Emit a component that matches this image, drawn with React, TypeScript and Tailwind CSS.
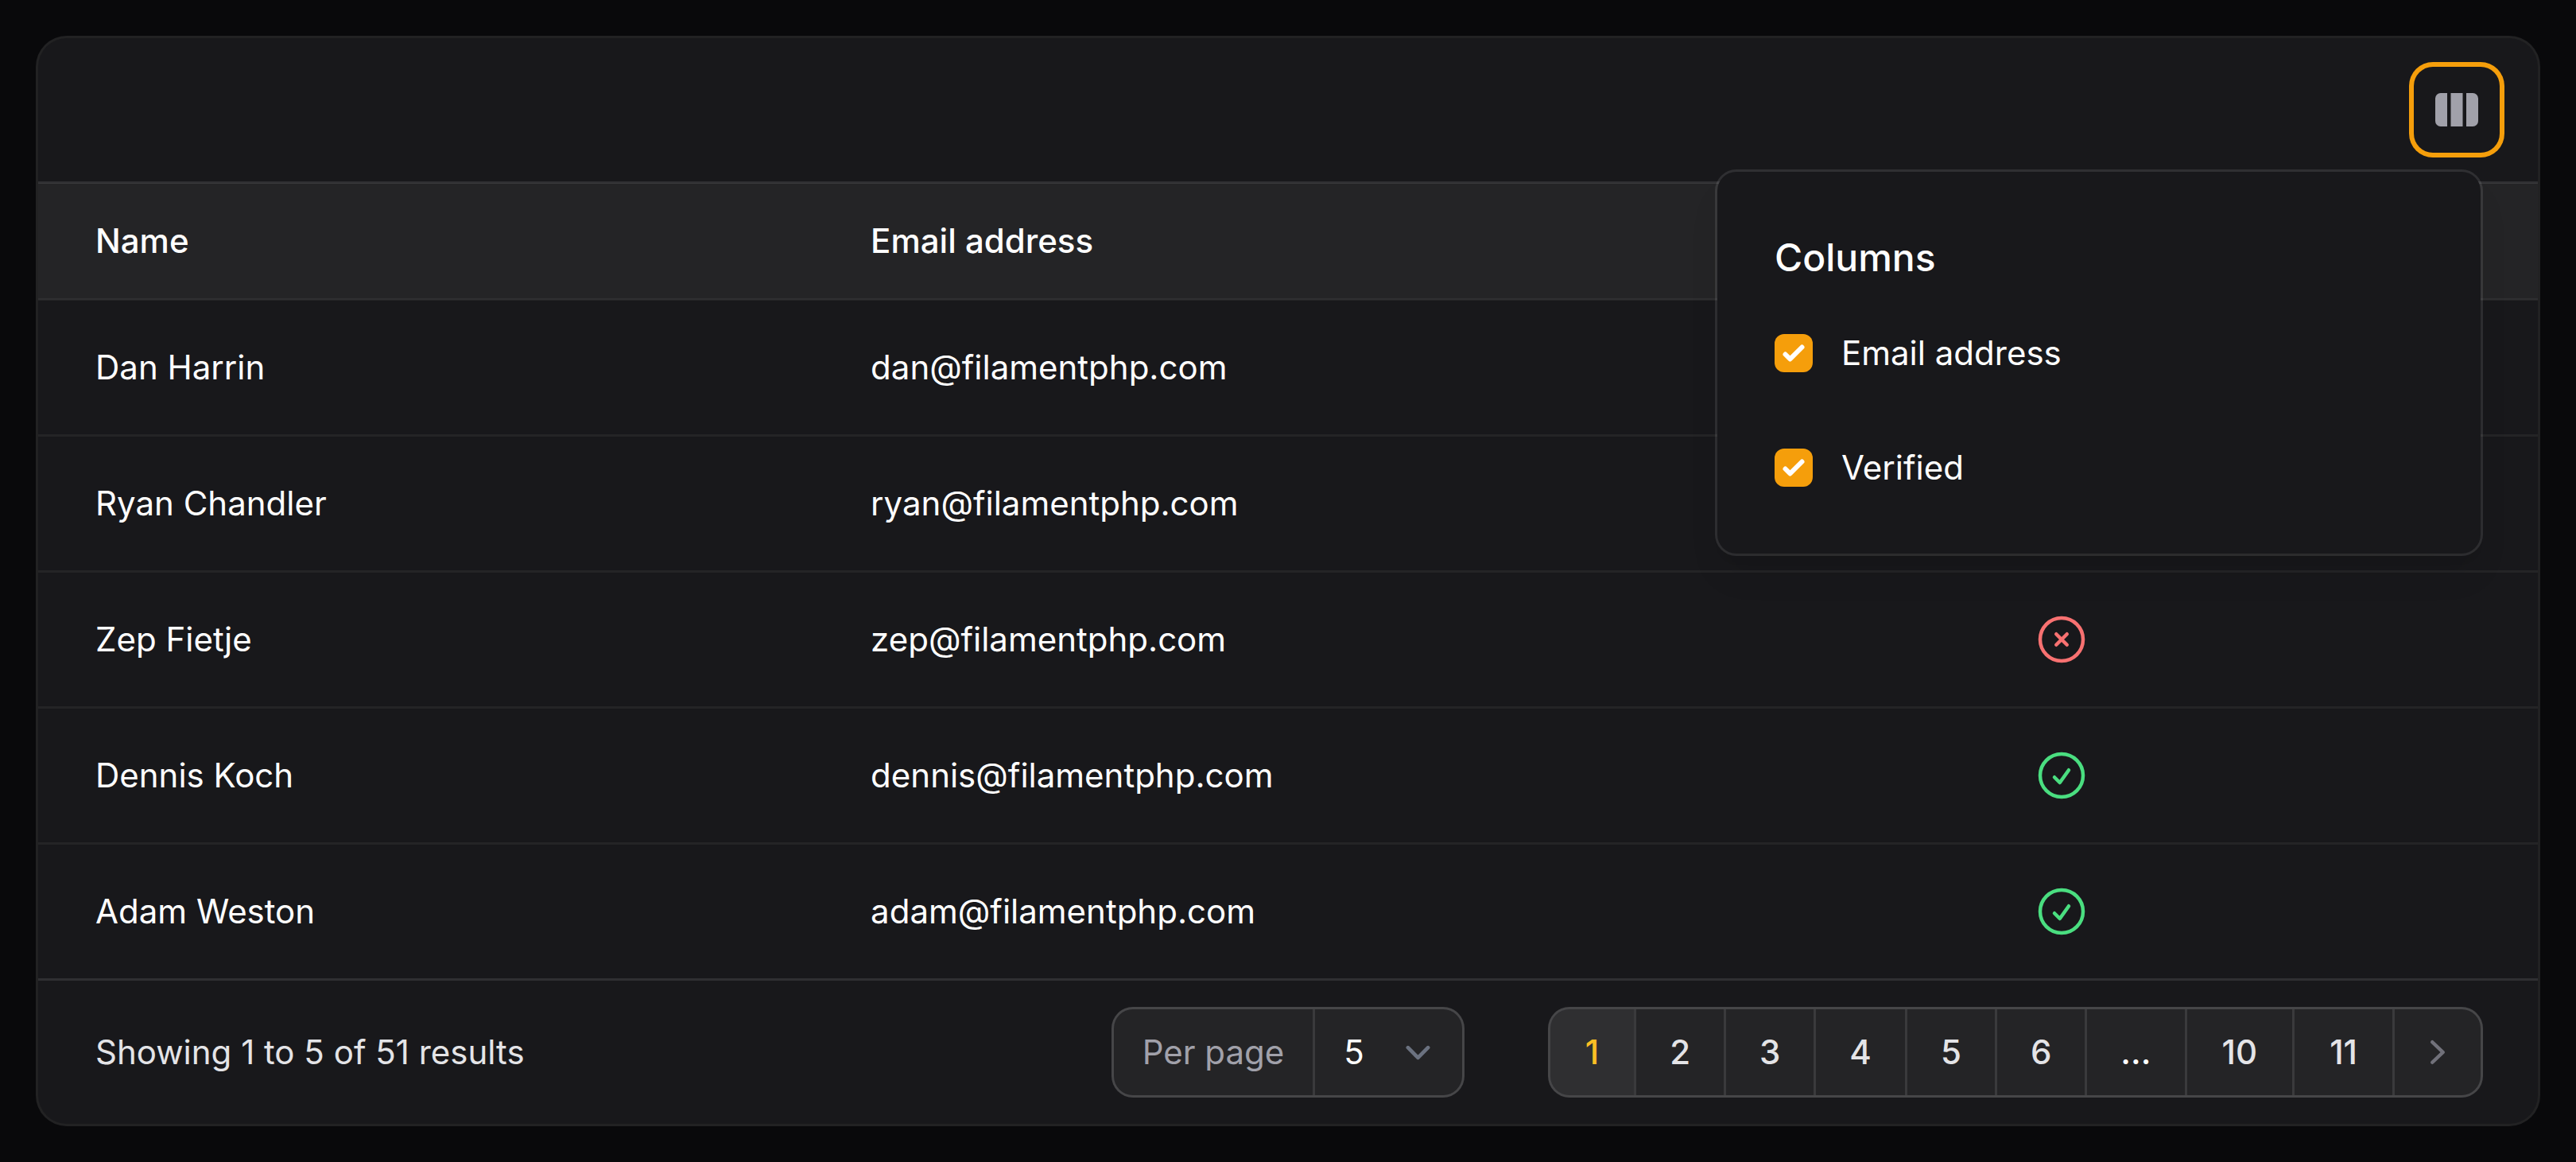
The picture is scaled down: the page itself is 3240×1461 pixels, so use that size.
import { useState } from "react";

type User = { name: string; email: string; verified: boolean };

const users: User[] = [
  { name: "Dan Harrin", email: "dan@filamentphp.com", verified: true },
  { name: "Ryan Chandler", email: "ryan@filamentphp.com", verified: true },
  { name: "Zep Fietje", email: "zep@filamentphp.com", verified: false },
  { name: "Dennis Koch", email: "dennis@filamentphp.com", verified: true },
  { name: "Adam Weston", email: "adam@filamentphp.com", verified: true },
];

const pages = ["1", "2", "3", "4", "5", "6", "...", "10", "11"];

function StatusIcon({ ok }: { ok: boolean }) {
  return (
    <svg
      viewBox="0 0 24 24"
      fill="none"
      stroke="currentColor"
      strokeWidth={1.5}
      strokeLinecap="round"
      strokeLinejoin="round"
      role="img"
      aria-label={ok ? "Verified" : "Not verified"}
      className={ok ? "mx-auto size-[72px] text-[#4ade80]" : "mx-auto size-[72px] text-[#f87171]"}
    >
      <path
        d={
          ok
            ? "M9 12.75 11.25 15 15 9.75M21 12a9 9 0 1 1-18 0 9 9 0 0 1 18 0Z"
            : "m9.75 9.75 4.5 4.5m0-4.5-4.5 4.5M21 12a9 9 0 1 1-18 0 9 9 0 0 1 18 0Z"
        }
      />
    </svg>
  );
}

function ColumnToggle({ id, label }: { id: string; label: string }) {
  const [on, setOn] = useState(true);
  return (
    <div className="flex items-center gap-9">
      <span className="relative flex size-12">
        <input
          id={id}
          type="checkbox"
          checked={on}
          onChange={() => setOn(!on)}
          className="peer size-12 appearance-none rounded-xl bg-white/10 checked:bg-[#f59e0b]"
        />
        <svg
          viewBox="0 0 16 16"
          fill="white"
          aria-hidden="true"
          className="pointer-events-none absolute inset-0 hidden size-12 peer-checked:block"
        >
          <path d="M12.207 4.793a1 1 0 010 1.414l-5 5a1 1 0 01-1.414 0l-2-2a1 1 0 011.414-1.414L6.5 9.086l4.293-4.293a1 1 0 011.414 0z" />
        </svg>
      </span>
      <label htmlFor={id} className="leading-[72px]">
        {label}
      </label>
    </div>
  );
}

function ColumnsMenu() {
  return (
    <div className="relative">
      <button
        type="button"
        aria-label="Columns"
        className="-mr-6 flex size-[108px] items-center justify-center rounded-3xl text-[#a1a1aa] ring-6 ring-[#f59e0b]"
      >
        <svg viewBox="0 0 20 20" fill="currentColor" aria-hidden="true" className="size-[60px]">
          <path d="M14 17h2.75A2.25 2.25 0 0 0 19 14.75v-9.5A2.25 2.25 0 0 0 16.75 3H14v14ZM12.5 3h-5v14h5V3ZM3.25 3H6v14H3.25A2.25 2.25 0 0 1 1 14.75v-9.5A2.25 2.25 0 0 1 3.25 3Z" />
        </svg>
      </button>
      <div className="absolute top-full right-0 z-10 mt-6 w-[960px] rounded-3xl bg-[#18181b] p-[72px] shadow-[0_30px_45px_-9px_rgb(0_0_0/0.1),0_12px_18px_-12px_rgb(0_0_0/0.1)] ring-3 ring-white/10">
        <h4 className="text-[48px] leading-[72px] font-medium">Columns</h4>
        <div className="mt-12 flex flex-col gap-[72px]">
          <ColumnToggle id="toggle-email" label="Email address" />
          <ColumnToggle id="toggle-verified" label="Verified" />
        </div>
      </div>
    </div>
  );
}

function PerPage() {
  return (
    <div className="flex h-[108px] items-stretch rounded-3xl bg-white/5 ring-3 ring-white/20">
      <label
        htmlFor="per-page"
        className="flex items-center border-r-3 border-white/10 px-9 text-[#a1a1aa]"
      >
        Per page
      </label>
      <div className="relative flex">
        <select
          id="per-page"
          defaultValue="5"
          className="appearance-none bg-transparent pr-24 pl-9 text-white outline-none"
        >
          <option>5</option>
          <option>10</option>
          <option>25</option>
          <option>50</option>
        </select>
        <svg
          viewBox="0 0 20 20"
          fill="none"
          stroke="#6b7280"
          strokeWidth={1.5}
          strokeLinecap="round"
          strokeLinejoin="round"
          aria-hidden="true"
          className="pointer-events-none absolute inset-y-0 right-6 my-auto size-[63px]"
        >
          <path d="M6 8l4 4 4-4" />
        </svg>
      </div>
    </div>
  );
}

function Pagination() {
  return (
    <nav aria-label="Pagination" className="justify-self-end">
      <ol className="flex h-[108px] divide-x-3 divide-white/10 rounded-3xl bg-white/5 ring-3 ring-white/20">
        {pages.map((page, i) => (
          <li key={page} className="flex">
            {page === "..." ? (
              <span className="flex items-center px-[42px] font-medium text-white">...</span>
            ) : (
              <button
                type="button"
                aria-current={i === 0 ? "page" : undefined}
                className={
                  i === 0
                    ? "rounded-l-3xl bg-white/5 px-11 font-medium text-[#fbbf24]"
                    : page.length > 1
                      ? "px-11 font-medium text-[#e4e4e7]"
                      : "px-[42px] font-medium text-[#e4e4e7]"
                }
              >
                {page}
              </button>
            )}
          </li>
        ))}
        <li className="flex">
          <button type="button" aria-label="Next" className="px-6 text-[#71717a]">
            <svg viewBox="0 0 20 20" fill="currentColor" aria-hidden="true" className="size-[60px]">
              <path
                fillRule="evenodd"
                clipRule="evenodd"
                d="M7.21 14.77a.75.75 0 01.02-1.06L11.168 10 7.23 6.29a.75.75 0 111.04-1.08l4.5 4.25a.75.75 0 010 1.08l-4.5 4.25a.75.75 0 01-1.06-.02z"
              />
            </svg>
          </button>
        </li>
      </ol>
    </nav>
  );
}

export default function App() {
  return (
    <main className="min-h-screen bg-[#09090b] p-12 font-['Inter',sans-serif] text-[42px] leading-[60px] text-white">
      <section className="rounded-[36px] bg-[#18181b] ring-3 ring-white/10">
        <div className="flex justify-end px-[72px] py-9">
          <ColumnsMenu />
        </div>
        <table className="w-full table-fixed border-collapse border-y-3 border-white/10 text-left">
          <thead className="bg-white/5">
            <tr>
              <th scope="col" className="w-[32.16%] py-[42px] pr-9 pl-[72px] font-medium">
                Name
              </th>
              <th scope="col" className="px-9 py-[42px] font-medium">
                Email address
              </th>
              <th scope="col" className="w-[38.08%] px-9 py-[42px] text-center font-medium">
                Verified
              </th>
            </tr>
          </thead>
          <tbody>
            {users.map((user) => (
              <tr key={user.email} className="border-t-3 border-white/5">
                <td className="py-12 pr-9 pl-[72px]">{user.name}</td>
                <td className="px-9 py-12">{user.email}</td>
                <td className="px-9 py-12">
                  <StatusIcon ok={user.verified} />
                </td>
              </tr>
            ))}
          </tbody>
        </table>
        <footer className="grid grid-cols-[1fr_auto_1fr] items-center gap-9 px-[72px] py-9">
          <p className="text-[#e4e4e7]">Showing 1 to 5 of 51 results</p>
          <PerPage />
          <Pagination />
        </footer>
      </section>
    </main>
  );
}
